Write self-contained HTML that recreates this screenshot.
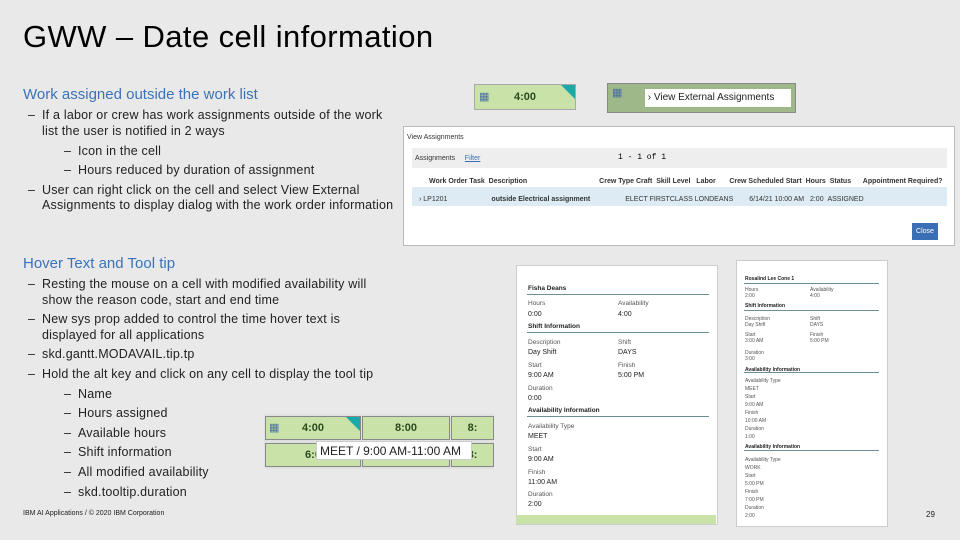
<!DOCTYPE html><html><head><meta charset="utf-8"><style>
body{margin:0;width:960px;height:540px;background:#e9e9e9;position:relative;overflow:hidden;font-family:"Liberation Sans",sans-serif;}
.a{position:absolute;white-space:nowrap}
.t{font-size:12.5px;color:#222;letter-spacing:0.2px}
.h{font-size:15px;color:#3b73b9}
.s{font-size:7px;color:#333}
.cell{position:absolute;background:#c8e2a8;border:1px solid #888;box-sizing:border-box;font:bold 11px "Liberation Sans",sans-serif;color:#2c4a20;text-align:center}
.tri{position:absolute;right:0;top:0;width:0;height:0;border-top:14px solid #1aa9a9;border-left:14px solid transparent}
.lbl{font-size:6.5px;color:#555;position:absolute}
.val{font-size:7px;color:#222;position:absolute}
.sec{font-size:6.5px;font-weight:bold;color:#222;position:absolute}
.ln{position:absolute;height:1px;background:#6a8f96}
</style></head><body>
<div class="a" style="left:23px;top:19px;font-size:31px;color:#000;letter-spacing:0.4px">GWW – Date cell information</div>
<div class="a h" style="left:23px;top:86px">Work assigned outside the work list</div>
<div class="a t" style="left:28px;top:108px">–</div><div class="a t" style="left:42px;top:108px">If a labor or crew has work assignments outside of the work</div>
<div class="a t" style="left:42px;top:124px">list the user is notified in 2 ways</div>
<div class="a t" style="left:64px;top:144px">–</div><div class="a t" style="left:78px;top:144px">Icon in the cell</div>
<div class="a t" style="left:64px;top:163px">–</div><div class="a t" style="left:78px;top:163px">Hours reduced by duration of assignment</div>
<div class="a t" style="left:28px;top:183px">–</div><div class="a t" style="left:42px;top:183px">User can right click on the cell and select View External</div>
<div class="a t" style="left:42px;top:198px">Assignments to display dialog with the work order information</div>

<div class="a h" style="left:23px;top:255px">Hover Text and Tool tip</div>
<div class="a t" style="left:28px;top:277px">–</div><div class="a t" style="left:42px;top:277px">Resting the mouse on a cell with modified availability will</div>
<div class="a t" style="left:42px;top:293px">show the reason code, start and end time</div>
<div class="a t" style="left:28px;top:312px">–</div><div class="a t" style="left:42px;top:312px">New sys prop added to control the time hover text is</div>
<div class="a t" style="left:42px;top:328px">displayed for all applications</div>
<div class="a t" style="left:28px;top:347px">–</div><div class="a t" style="left:42px;top:347px">skd.gantt.MODAVAIL.tip.tp</div>
<div class="a t" style="left:28px;top:367px">–</div><div class="a t" style="left:42px;top:367px">Hold the alt key and click on any cell to display the tool tip</div>
<div class="a t" style="left:64px;top:387px">–</div><div class="a t" style="left:78px;top:387px">Name</div>
<div class="a t" style="left:64px;top:406px">–</div><div class="a t" style="left:78px;top:406px">Hours assigned</div>
<div class="a t" style="left:64px;top:426px">–</div><div class="a t" style="left:78px;top:426px">Available hours</div>
<div class="a t" style="left:64px;top:445px">–</div><div class="a t" style="left:78px;top:445px">Shift information</div>
<div class="a t" style="left:64px;top:465px">–</div><div class="a t" style="left:78px;top:465px">All modified availability</div>
<div class="a t" style="left:64px;top:485px">–</div><div class="a t" style="left:78px;top:485px">skd.tooltip.duration</div>
<div class="a" style="left:23px;top:510px;font-size:7px;color:#222">IBM AI Applications / © 2020 IBM Corporation</div>
<div class="a" style="left:926px;top:510px;font-size:8px;color:#222">29</div>

<div class="cell" style="left:474px;top:84px;width:102px;height:26px;line-height:24px;border-color:#aaa">4:00<div class="tri"></div><span style="position:absolute;left:4px;top:0;color:#4a6fa0;font-weight:normal">▦</span></div>
<div class="a" style="left:607px;top:83px;width:187px;height:28px;background:#9fb88a;border:1px solid #888"></div>
<div class="a" style="left:612px;top:86px;font-size:11px;color:#4a6fa0">▦</div>
<div class="a" style="left:645px;top:89px;width:146px;height:18px;background:#fff;font-size:10px;line-height:18px;color:#222">&nbsp;›&nbsp;View External Assignments</div>

<div class="a" style="left:403px;top:126px;width:550px;height:118px;background:#fff;border:1px solid #bbb">
 <div class="a s" style="left:3px;top:7px">View Assignments</div>
 <div class="a" style="left:8px;top:21px;width:535px;height:20px;background:#eee"></div>
 <div class="a s" style="left:11px;top:28px">Assignments &nbsp;&nbsp;&nbsp;&nbsp;<span style="color:#3b6fb5;text-decoration:underline">Filter</span></div>
 <div class="a" style="left:214px;top:26px;font-size:8px;font-family:'Liberation Mono',monospace">1 - 1 of 1</div>
 <div class="a" style="left:8px;top:60px;width:535px;height:19px;background:#dcebf4"></div>
 <div class="a s" style="left:25px;top:51px;font-weight:bold">Work Order Task &nbsp;Description<span style="margin-left:72px">Crew Type Craft &nbsp;Skill Level &nbsp;&nbsp;Labor &nbsp;&nbsp;&nbsp;&nbsp;&nbsp;&nbsp;Crew Scheduled Start &nbsp;Hours &nbsp;Status &nbsp;&nbsp;&nbsp;&nbsp;&nbsp;Appointment Required?</span></div>
 <div class="a s" style="left:15px;top:69px">› LP1201<span style="margin-left:44px;font-weight:bold">outside Electrical assignment</span><span style="margin-left:35px">ELECT FIRSTCLASS LONDEANS</span><span style="margin-left:16px">6/14/21 10:00 AM &nbsp;&nbsp;2:00 &nbsp;ASSIGNED</span></div>
 <div class="a" style="left:508px;top:96px;width:26px;height:17px;background:#3a6fb5;color:#fff;font-size:7px;line-height:17px;text-align:center">Close</div>
</div>

<div class="a" style="left:516px;top:265px;width:200px;height:258px;background:#fff;border:1px solid #ccc"></div>
<div class="a" style="left:516px;top:515px;width:200px;height:9px;background:#c8e2a8"></div>
<div class="sec" style="left:528px;top:285px">Fisha Deans</div><div class="ln" style="left:527px;top:294px;width:182px"></div>
<div class="lbl" style="left:528px;top:300px">Hours</div><div class="lbl" style="left:618px;top:300px">Availability</div>
<div class="val" style="left:528px;top:311px">0:00</div><div class="val" style="left:618px;top:311px">4:00</div>
<div class="sec" style="left:528px;top:323px">Shift Information</div><div class="ln" style="left:527px;top:332px;width:182px"></div>
<div class="lbl" style="left:528px;top:339px">Description</div><div class="lbl" style="left:618px;top:339px">Shift</div>
<div class="val" style="left:528px;top:349px">Day Shift</div><div class="val" style="left:618px;top:349px">DAYS</div>
<div class="lbl" style="left:528px;top:362px">Start</div><div class="lbl" style="left:618px;top:362px">Finish</div>
<div class="val" style="left:528px;top:372px">9:00 AM</div><div class="val" style="left:618px;top:372px">5:00 PM</div>
<div class="lbl" style="left:528px;top:385px">Duration</div><div class="val" style="left:528px;top:395px">0:00</div>
<div class="sec" style="left:528px;top:407px">Availability Information</div><div class="ln" style="left:527px;top:416px;width:182px"></div>
<div class="lbl" style="left:528px;top:423px">Availability Type</div><div class="val" style="left:528px;top:433px">MEET</div>
<div class="lbl" style="left:528px;top:446px">Start</div><div class="val" style="left:528px;top:456px">9:00 AM</div>
<div class="lbl" style="left:528px;top:469px">Finish</div><div class="val" style="left:528px;top:479px">11:00 AM</div>
<div class="lbl" style="left:528px;top:491px">Duration</div><div class="val" style="left:528px;top:501px">2:00</div>

<div class="a" style="left:736px;top:260px;width:150px;height:265px;background:#fff;border:1px solid #ccc"></div>
<div class="sec" style="left:745px;top:276px;font-size:5px">Rosalind Lee Cone 1</div><div class="ln" style="left:744px;top:283px;width:135px"></div>
<div class="lbl" style="left:745px;top:287px;font-size:5px">Hours<br>2:00</div><div class="lbl" style="left:810px;top:287px;font-size:5px">Availability<br>4:00</div>
<div class="sec" style="left:745px;top:303px;font-size:5px">Shift Information</div><div class="ln" style="left:744px;top:310px;width:135px"></div>
<div class="lbl" style="left:745px;top:316px;font-size:5px">Description<br>Day Shift</div><div class="lbl" style="left:810px;top:316px;font-size:5px">Shift<br>DAYS</div>
<div class="lbl" style="left:745px;top:332px;font-size:5px">Start<br>3:00 AM</div><div class="lbl" style="left:810px;top:332px;font-size:5px">Finish<br>5:00 PM</div>
<div class="lbl" style="left:745px;top:350px;font-size:5px">Duration<br>3:00</div>
<div class="sec" style="left:745px;top:367px;font-size:5px">Availability Information</div><div class="ln" style="left:744px;top:372px;width:135px"></div>
<div class="lbl" style="left:745px;top:377px;font-size:5px;line-height:8px">Availability Type<br>MEET<br>Start<br>9:00 AM<br>Finish<br>10:00 AM<br>Duration<br>1:00</div>
<div class="sec" style="left:745px;top:444px;font-size:5px">Availability Information</div><div class="ln" style="left:744px;top:450px;width:135px"></div>
<div class="lbl" style="left:745px;top:456px;font-size:5px;line-height:8px">Availability Type<br>WORK<br>Start<br>5:00 PM<br>Finish<br>7:00 PM<br>Duration<br>2:00</div>

<div class="a" style="left:264px;top:414px;width:230px;height:55px;background:#e0e0e0"></div>
<div class="cell" style="left:265px;top:416px;width:96px;height:24px;line-height:22px">4:00<div class="tri"></div><span style="position:absolute;left:3px;top:0;color:#4a6fa0;font-weight:normal">▦</span></div>
<div class="cell" style="left:362px;top:416px;width:88px;height:24px;line-height:22px">8:00</div>
<div class="cell" style="left:451px;top:416px;width:43px;height:24px;line-height:22px">8:</div>
<div class="cell" style="left:265px;top:443px;width:96px;height:24px;line-height:22px">6:0</div>
<div class="cell" style="left:362px;top:443px;width:88px;height:24px"></div>
<div class="cell" style="left:451px;top:443px;width:43px;height:24px;line-height:22px">8:</div>
<div class="a" style="left:316px;top:441px;width:156px;height:19px;background:#fff;border:1px solid #ccc;font-size:12px;line-height:19px;color:#222;padding-left:3px;box-sizing:border-box">MEET / 9:00 AM-11:00 AM</div>
</body></html>
